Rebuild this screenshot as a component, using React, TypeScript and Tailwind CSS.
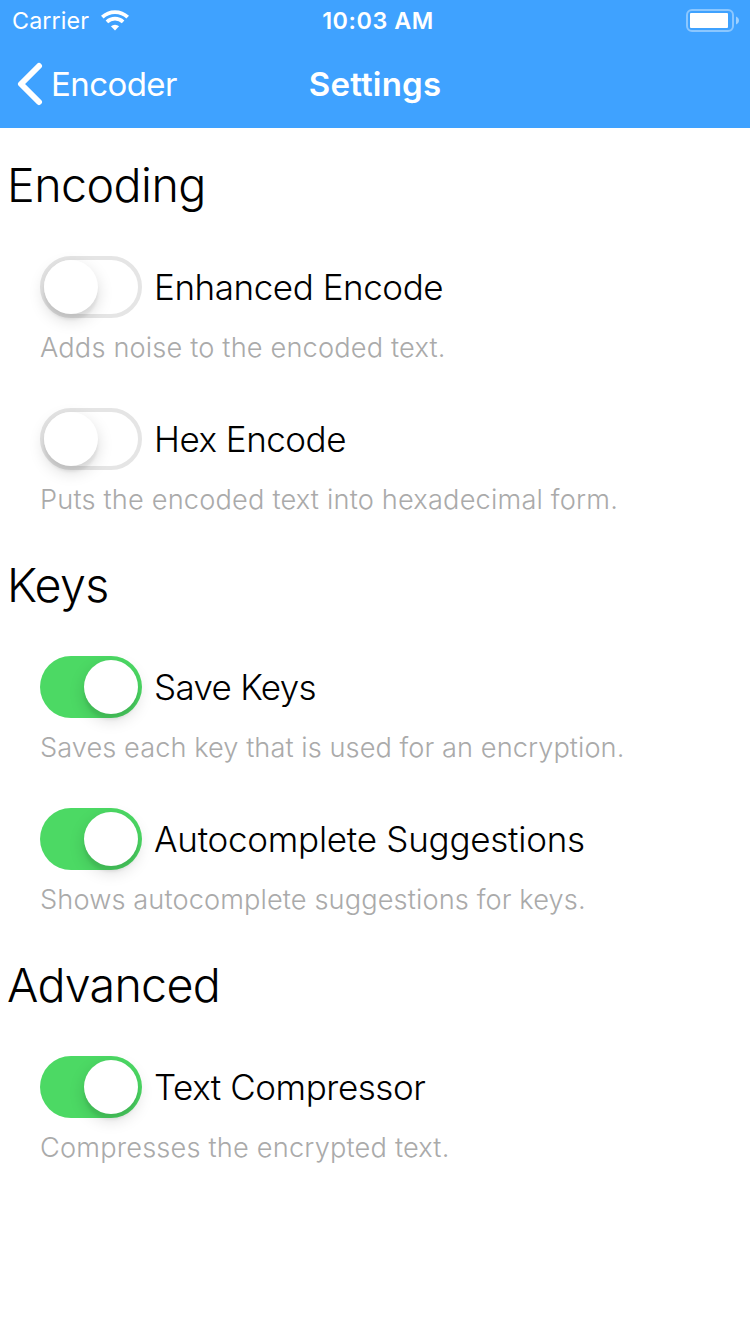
import React from "react";

type Setting = { label: string; note: string; on: boolean; labelSpacing: string; noteSpacing: string };
type Section = { title: string; titleSpacing: string; items: Setting[] };

const sections: Section[] = [
  {
    title: "Encoding",
    titleSpacing: "tracking-[-0.55px]",
    items: [
      { label: "Enhanced Encode", note: "Adds noise to the encoded text.", on: false, labelSpacing: "tracking-[-0.44px]", noteSpacing: "tracking-[0.16px]" },
      { label: "Hex Encode", note: "Puts the encoded text into hexadecimal form.", on: false, labelSpacing: "tracking-[-0.5px]", noteSpacing: "tracking-[0.18px]" },
    ],
  },
  {
    title: "Keys",
    titleSpacing: "tracking-[-0.7px]",
    items: [
      { label: "Save Keys", note: "Saves each key that is used for an encryption.", on: true, labelSpacing: "tracking-[-0.7px]", noteSpacing: "tracking-[0.06px]" },
      { label: "Autocomplete Suggestions", note: "Shows autocomplete suggestions for keys.", on: true, labelSpacing: "tracking-[-0.26px]", noteSpacing: "tracking-[0.11px]" },
    ],
  },
  {
    title: "Advanced",
    titleSpacing: "tracking-[-0.75px]",
    items: [{ label: "Text Compressor", note: "Compresses the encrypted text.", on: true, labelSpacing: "tracking-[-0.44px]", noteSpacing: "tracking-[0.18px]" }],
  },
];

function Toggle({ on }: { on: boolean }) {
  return (
    <div
      className={
        on
          ? "flex h-[62px] w-[102px] shrink-0 justify-end rounded-full bg-[#4cd964] p-1"
          : "flex h-[62px] w-[102px] shrink-0 rounded-full border-4 border-[#e5e5e5] bg-white"
      }
    >
      <div className="size-[54px] rounded-full bg-white shadow-[0_6px_16px_rgba(0,0,0,0.15),0_6px_3px_rgba(0,0,0,0.06)]" />
    </div>
  );
}

function WifiIcon() {
  return (
    <svg className="-mt-[2px]" width="28" height="21" viewBox="0 0 28 21" fill="none" stroke="white">
      <path d="M14 20.500 9.900 16.200a6.200 6.200 0 0 1 8.200 0Z" fill="white" stroke="none" />
      <path d="M5.900 11.800a11.800 11.800 0 0 1 16.200 0" strokeWidth="3.700" />
      <path d="M1.300 7.200a18.300 18.300 0 0 1 25.400 0" strokeWidth="3.700" />
    </svg>
  );
}

function BatteryIcon() {
  return (
    <svg width="54" height="24" viewBox="0 0 54 24" fill="none">
      <rect x="1" y="1" width="46" height="21" rx="5" stroke="white" strokeOpacity="0.4" strokeWidth="2" />
      <rect x="4" y="4" width="38" height="15" rx="1" fill="white" />
      <path d="M50 7.500c1.700.7 3 2.200 3 4s-1.300 3.300-3 4Z" fill="white" fillOpacity="0.5" />
    </svg>
  );
}

export default function App() {
  return (
    <div className="h-[1334px] w-[750px] overflow-hidden bg-white font-['Inter',sans-serif] text-black">
      <header className="h-32 bg-[#3fa2ff] text-white">
        <div className="grid h-10 grid-cols-3 items-center pt-[2px] pr-[10px] pl-3">
          <div className="flex items-center gap-3 text-[23.3px] tracking-[0.12px]">
            <span>Carrier</span>
            <WifiIcon />
          </div>
          <span className="pl-1 text-center text-[23.3px] font-semibold tracking-[0.55px]">10:03 AM</span>
          <div className="flex justify-end">
            <BatteryIcon />
          </div>
        </div>
        <div className="grid h-[88px] grid-cols-3 items-center px-4">
          <div className="flex items-center gap-[7px] text-[33px] tracking-[-0.57px]">
            <svg width="28" height="44" viewBox="0 0 28 44" fill="none" stroke="white" strokeWidth="6" strokeLinecap="round" strokeLinejoin="round">
              <path d="M23 4 5 22l18 18" />
            </svg>
            <span className="pt-[2px]">Encoder</span>
          </div>
          <span className="pt-[2px] text-center text-[33px] font-semibold tracking-[0.2px]">Settings</span>
          <div />
        </div>
      </header>
      <main>
        {sections.map((section) => (
          <section key={section.title}>
            <h1 className={`h-24 pt-7 pl-[7px] text-[46.6px] leading-[58px] font-light ${section.titleSpacing}`}>{section.title}</h1>
            {section.items.map((item) => (
              <div key={item.label} className="h-[152px] pt-8 pl-10">
                <div className="flex h-[62px] items-center gap-3">
                  <Toggle on={item.on} />
                  <span className={`text-[35px] font-light ${item.labelSpacing}`}>{item.label}</span>
                </div>
                <p className={`pt-3 text-[27.2px] leading-9 font-light text-[#aaa] ${item.noteSpacing}`}>{item.note}</p>
              </div>
            ))}
          </section>
        ))}
      </main>
    </div>
  );
}
